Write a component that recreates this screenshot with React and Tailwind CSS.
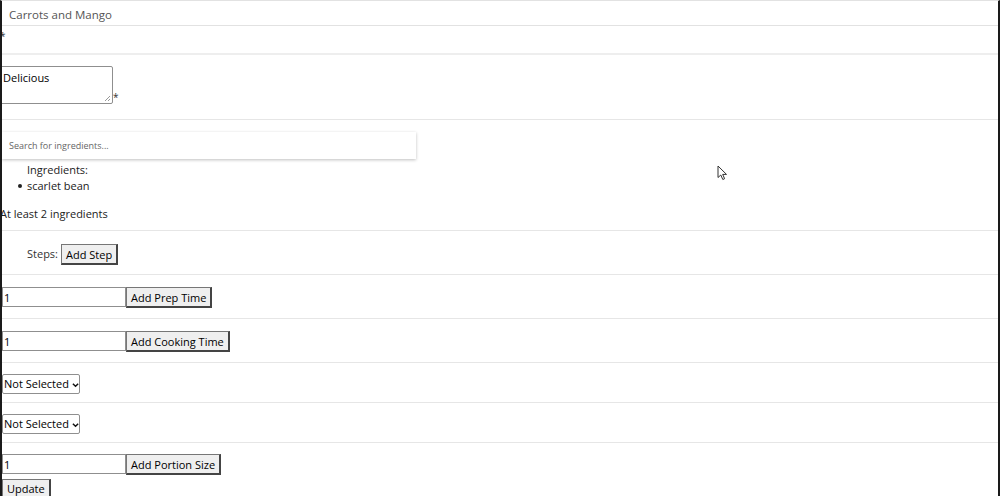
import React from "react";

const font = { fontFamily: '"Open Sans", "Noto Sans", sans-serif' };

const btn =
  "h-[21px] px-[4px] whitespace-nowrap bg-[#efefef] border border-[#767676] border-r-2 border-b-2 border-r-[#444] border-b-[#444] text-[11px] leading-none text-black";

function TimeRow({ label }) {
  return (
    <div className="h-[44px] border-b border-[#e6e6e6] flex items-start pt-[12px]">
      <input
        defaultValue="1"
        className="w-[124px] h-[20px] border border-[#8f8f8f] px-[1px] text-[11px] text-black outline-none"
      />
      <button className={btn}>{label}</button>
    </div>
  );
}

function SelectRow() {
  return (
    <div className="h-[40px] border-b border-[#e6e6e6] flex items-start pt-[11px]">
      <div className="h-[20px] w-[78px] border border-[#8f8f8f] rounded-[2px] flex items-center pl-[1px] gap-[3px] text-[11px] whitespace-nowrap text-black">
        <span>Not Selected</span>
        <svg width="8" height="6" viewBox="0 0 8 6" className="mt-[1px]">
          <path d="M1 1.5 L4 4.5 L7 1.5" stroke="#111" strokeWidth="1.6" fill="none" />
        </svg>
      </div>
    </div>
  );
}

export default function App() {
  return (
    <div
      className="relative w-[1000px] h-[496px] overflow-hidden bg-white border-l-2 border-l-[#1a1a1a] border-r-2 border-r-[#1a1a1a] border-t border-t-[#e2e2e2]"
      style={font}
    >
      <div className="h-[25px] border-b border-[#e2e2e2] flex items-center pt-[3px] pl-[7px] text-[11.5px] text-[#555]">
        Carrots and Mango
      </div>
      <div className="h-[29px] border-b-2 border-[#eeeeee] text-[10px] leading-none text-[#333] pt-[5px] -ml-[2px]">*</div>
      <div className="h-[65px] border-b border-[#e6e6e6] flex items-end pb-[15px] -ml-[2px]">
        <div className="w-[113px] h-[38px] border border-[#8f8f8f] rounded-[2px] text-[11px] text-black leading-[16px] pt-[3px] pl-[2px] relative">
          Delicious
          <svg width="7" height="7" viewBox="0 0 7 7" className="absolute right-[1px] bottom-[1px]">
            <path d="M6 1 L1 6 M6 4 L4 6" stroke="#999" strokeWidth="1" />
          </svg>
        </div>
        <span className="text-[10px] leading-none text-[#333] mb-[2px]">*</span>
      </div>
      <div className="h-[111px] border-b border-[#e6e6e6] pt-[12px]">
        <div className="w-[414px] h-[27px] bg-white shadow-[0_1px_3px_rgba(0,0,0,0.25)] flex items-center pl-[7px] text-[9px] text-[#666]">
          Search for ingredients...
        </div>
        <div className="pl-[25px] pt-[3px] text-[11px] text-[#222] leading-[16px]">Ingredients:</div>
        <ul className="pl-[16px] text-[11px] text-[#222] leading-[16px]">
          <li className="flex items-center gap-[5px]">
            <span className="w-[4px] h-[4px] rounded-full bg-[#222]" />
            scarlet bean
          </li>
        </ul>
        <div className="pt-[12px] text-[11px] text-[#222] leading-[16px] -ml-[2px]">At least 2 ingredients</div>
      </div>
      <div className="h-[44px] border-b border-[#e6e6e6] flex items-start pt-[13px] pl-[25px] gap-[3px]">
        <span className="text-[11px] text-[#333] leading-[20px]">Steps:</span>
        <button className={btn}>Add Step</button>
      </div>
      <TimeRow label="Add Prep Time" />
      <TimeRow label="Add Cooking Time" />
      <SelectRow />
      <SelectRow />
      <div className="pt-[11px]">
        <div className="flex items-start">
          <input
            defaultValue="1"
            className="w-[124px] h-[20px] border border-[#8f8f8f] px-[1px] text-[11px] text-black outline-none"
          />
          <button className={btn}>Add Portion Size</button>
        </div>
        <button className={btn + " mt-[1px] px-[3px]"}>Update</button>
      </div>
      <svg width="12" height="16" viewBox="0 0 12 16" className="absolute left-[715px] top-[164px]">
        <path d="M1 1 L1 12.5 L3.8 10 L5.8 14.5 L7.6 13.7 L5.7 9.4 L9.5 9.4 Z" fill="#fff" stroke="#333" strokeWidth="1" strokeLinejoin="round" />
      </svg>
    </div>
  );
}
